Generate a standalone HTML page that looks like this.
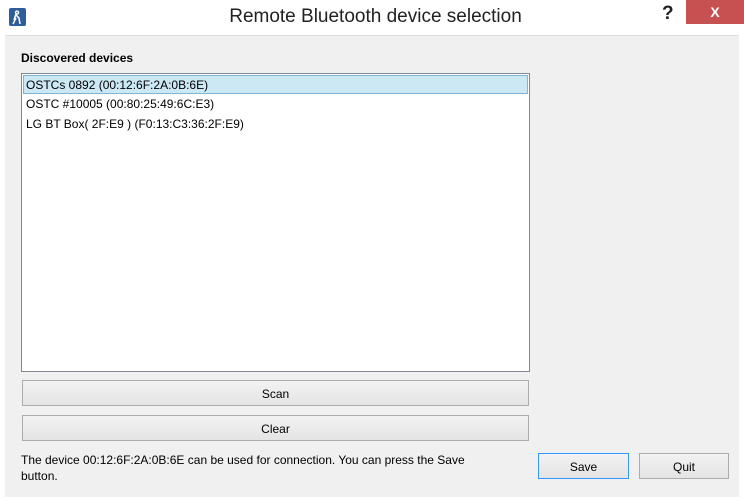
<!DOCTYPE html>
<html><head><style>
*{margin:0;padding:0;box-sizing:border-box}
body{width:744px;height:499px;background:#fff;font-family:"Liberation Sans",sans-serif;font-size:12px;color:#000;position:relative;overflow:hidden}
.abs{position:absolute}
.title{left:0;top:6px;width:751px;text-align:center;font-size:19px;color:#222}
.content{left:5px;top:35px;width:734px;height:462px;background:#f0f0f0;border-top:1px solid #ddd}
.btn{position:absolute;background:linear-gradient(#f2f2f2,#e4e4e4);border:1px solid #acacac;text-align:center;font-size:12px}
.row{position:absolute;left:26px;white-space:nowrap;font-size:12px}
</style></head><body>
<div class="abs" style="left:9px;top:8px;width:17px;height:18px;background:#2d5d9a;border-radius:2px"><svg width="17" height="18"><path d="M8 3a1.5 1.5 0 1 0 .1 0M7 6l-2 6M7 7l3 3l1 6M7 10l-3 6" stroke="#fff" stroke-width="1.5" fill="none"/></svg></div>
<div class="abs title">Remote Bluetooth device selection</div>
<div class="abs" style="left:662px;top:3px;font-size:19px;font-weight:bold;color:#222">?</div>
<div class="abs" style="left:686px;top:0;width:58px;height:24px;background:#c75050;color:#fff;text-align:center;font-size:14px;line-height:24px;font-weight:bold">X</div>
<div class="abs content"></div>
<div class="abs" style="left:21px;top:51px;font-weight:bold;font-size:12px">Discovered devices</div>
<div class="abs" style="left:21px;top:73px;width:509px;height:299px;background:#fff;border:1px solid #828790"></div>
<div class="abs" style="left:23px;top:75px;width:505px;height:19px;background:#cce8f4;border:1px solid #7fb4d8"></div>
<div class="row" style="top:78px">OSTCs 0892 (00:12:6F:2A:0B:6E)</div>
<div class="row" style="top:97px">OSTC #10005 (00:80:25:49:6C:E3)</div>
<div class="row" style="top:117px">LG BT Box( 2F:E9 ) (F0:13:C3:36:2F:E9)</div>
<div class="btn" style="left:22px;top:380px;width:507px;height:26px;line-height:27px">Scan</div>
<div class="btn" style="left:22px;top:415px;width:507px;height:26px;line-height:27px">Clear</div>
<div class="abs" style="left:21px;top:452px;width:480px;line-height:16px">The device 00:12:6F:2A:0B:6E can be used for connection. You can press the Save button.</div>
<div class="btn" style="left:538px;top:453px;width:91px;height:26px;line-height:27px;border-color:#3399ff">Save</div>
<div class="btn" style="left:639px;top:453px;width:90px;height:26px;line-height:27px">Quit</div>
</body></html>
